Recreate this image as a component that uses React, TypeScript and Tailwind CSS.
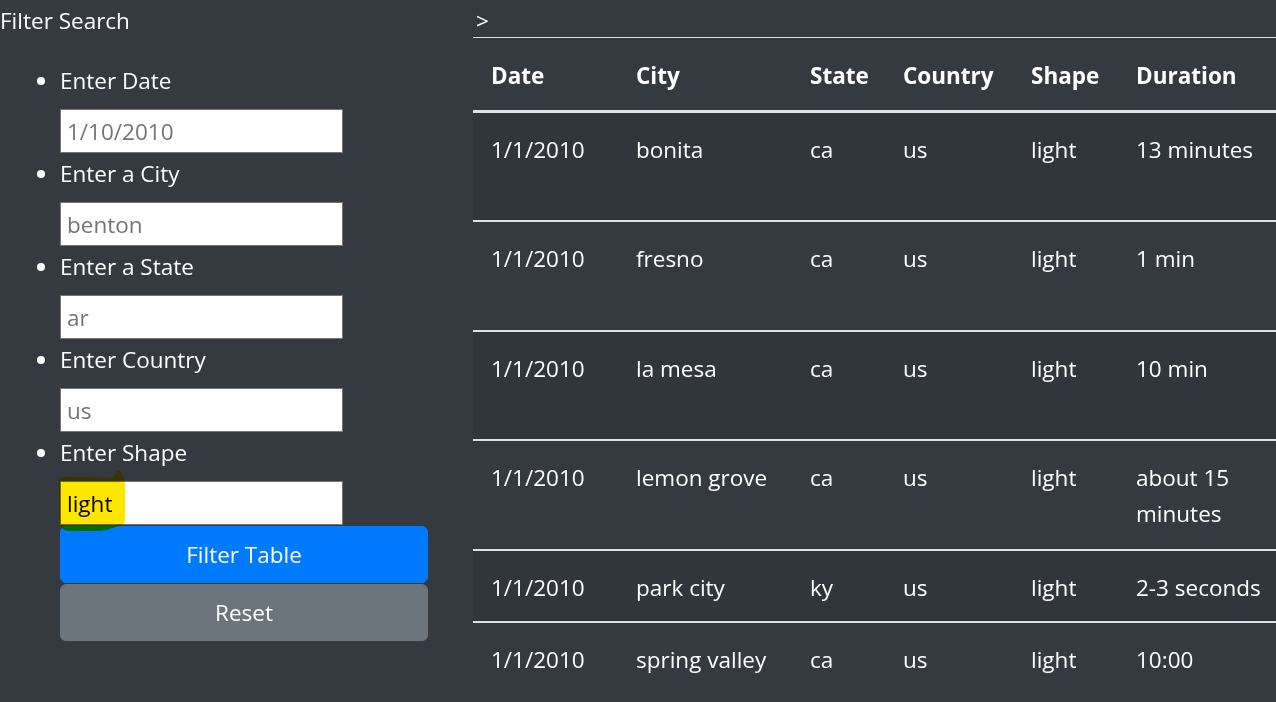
import React from "react";

type Sighting = {
  date: string;
  city: string;
  state: string;
  country: string;
  shape: string;
  duration: string;
  tall: boolean;
};

const rows: Sighting[] = [
  { date: "1/1/2010", city: "bonita", state: "ca", country: "us", shape: "light", duration: "13 minutes", tall: true },
  { date: "1/1/2010", city: "fresno", state: "ca", country: "us", shape: "light", duration: "1 min", tall: true },
  { date: "1/1/2010", city: "la mesa", state: "ca", country: "us", shape: "light", duration: "10 min", tall: true },
  { date: "1/1/2010", city: "lemon grove", state: "ca", country: "us", shape: "light", duration: "about 15 minutes", tall: true },
  { date: "1/1/2010", city: "park city", state: "ky", country: "us", shape: "light", duration: "2-3 seconds", tall: false },
  { date: "1/1/2010", city: "spring valley", state: "ca", country: "us", shape: "light", duration: "10:00", tall: false },
];

const filters = [
  { label: "Enter Date", placeholder: "1/10/2010" },
  { label: "Enter a City", placeholder: "benton" },
  { label: "Enter a State", placeholder: "ar" },
  { label: "Enter Country", placeholder: "us" },
];

function FilterInput({ placeholder, value }: { placeholder?: string; value?: string }) {
  return (
    <input
      type="text"
      placeholder={placeholder}
      defaultValue={value}
      className="block h-[44px] w-[283px] border border-[#767676] bg-white px-[6px] text-[22.5px] leading-[36px] text-black outline-none placeholder:text-[#757575]"
    />
  );
}

export default function App() {
  return (
    <div className="flex min-h-[702px] w-full bg-[#343a40] font-['Open_Sans',sans-serif] text-[22.5px] leading-[36px] text-white">
      {/* filter sidebar */}
      <aside className="w-[473px] shrink-0">
        <div className="pt-[3px]">Filter Search</div>
        <ul className="mt-[24px] flex flex-col gap-[3px] list-disc pl-[60px]">
          {filters.map((f) => (
            <li key={f.label}>
              {f.label}
              <div className="pt-[10px]">
                <FilterInput placeholder={f.placeholder} />
              </div>
            </li>
          ))}
          <li>
            Enter Shape
            <div className="relative mt-[10px]">
              <FilterInput value="light" />
              {/* highlighter stroke over the shape value */}
              <svg
                className="pointer-events-none absolute left-[-4px] top-[-11px] mix-blend-multiply"
                width="72"
                height="66"
                viewBox="0 0 72 66"
              >
                <path
                  d="M3 12 Q3 7 8 7 L54 8 Q57 8 59 4 L62 1 Q65 0 66 3 L68 10 Q69 12 69 16 L69 50 Q69 55 63 56 L56 58 Q50 61 44 61 L14 61 Q7 61 5 57 L3 50 Z"
                  fill="#ffe600"
                />
              </svg>
            </div>
          </li>
        </ul>
        <div className="flex flex-col gap-[1px] pl-[60px] pt-[1px]">
          <button className="block h-[57px] w-[368px] rounded-[6px] border border-[#007bff] bg-[#007bff] text-white">
            Filter Table
          </button>
          <button className="block h-[57px] w-[368px] rounded-[6px] border border-[#6c757d] bg-[#6c757d] text-white">
            Reset
          </button>
        </div>
      </aside>

      {/* results */}
      <main className="min-w-0 flex-1 overflow-hidden">
        <div className="h-[37px] pl-[3px] pt-[3px]">&gt;</div>
        <table className="w-[815px] table-fixed border-collapse text-left">
          <colgroup>
            <col className="w-[145px]" />
            <col className="w-[174px]" />
            <col className="w-[93px]" />
            <col className="w-[128px]" />
            <col className="w-[105px]" />
            <col className="w-[170px]" />
          </colgroup>
          <thead>
            <tr>
              {["Date", "City", "State", "Country", "Shape", "Duration"].map((h) => (
                <th
                  key={h}
                  className="h-[74px] border-t border-b-[3px] border-[#dee2e6] px-[18px] pt-[20px] align-top font-bold whitespace-nowrap"
                >
                  {h}
                </th>
              ))}
            </tr>
          </thead>
          <tbody>
            {rows.map((r, i) => {
              const cells = [r.date, r.city, r.state, r.country, r.shape, r.duration];
              return (
                <tr key={i} className={i % 2 === 0 ? "bg-[#31363c]" : ""}>
                  {cells.map((c, j) => (
                    <td
                      key={j}
                      className={`border-t-2 border-[#dee2e6] px-[18px] pt-[19px] align-top ${
                        j < 5 ? "whitespace-nowrap" : ""
                      } ${r.tall ? "h-[109.6px]" : "h-[72.6px]"}`}
                    >
                      {c}
                    </td>
                  ))}
                </tr>
              );
            })}
          </tbody>
        </table>
      </main>
    </div>
  );
}
